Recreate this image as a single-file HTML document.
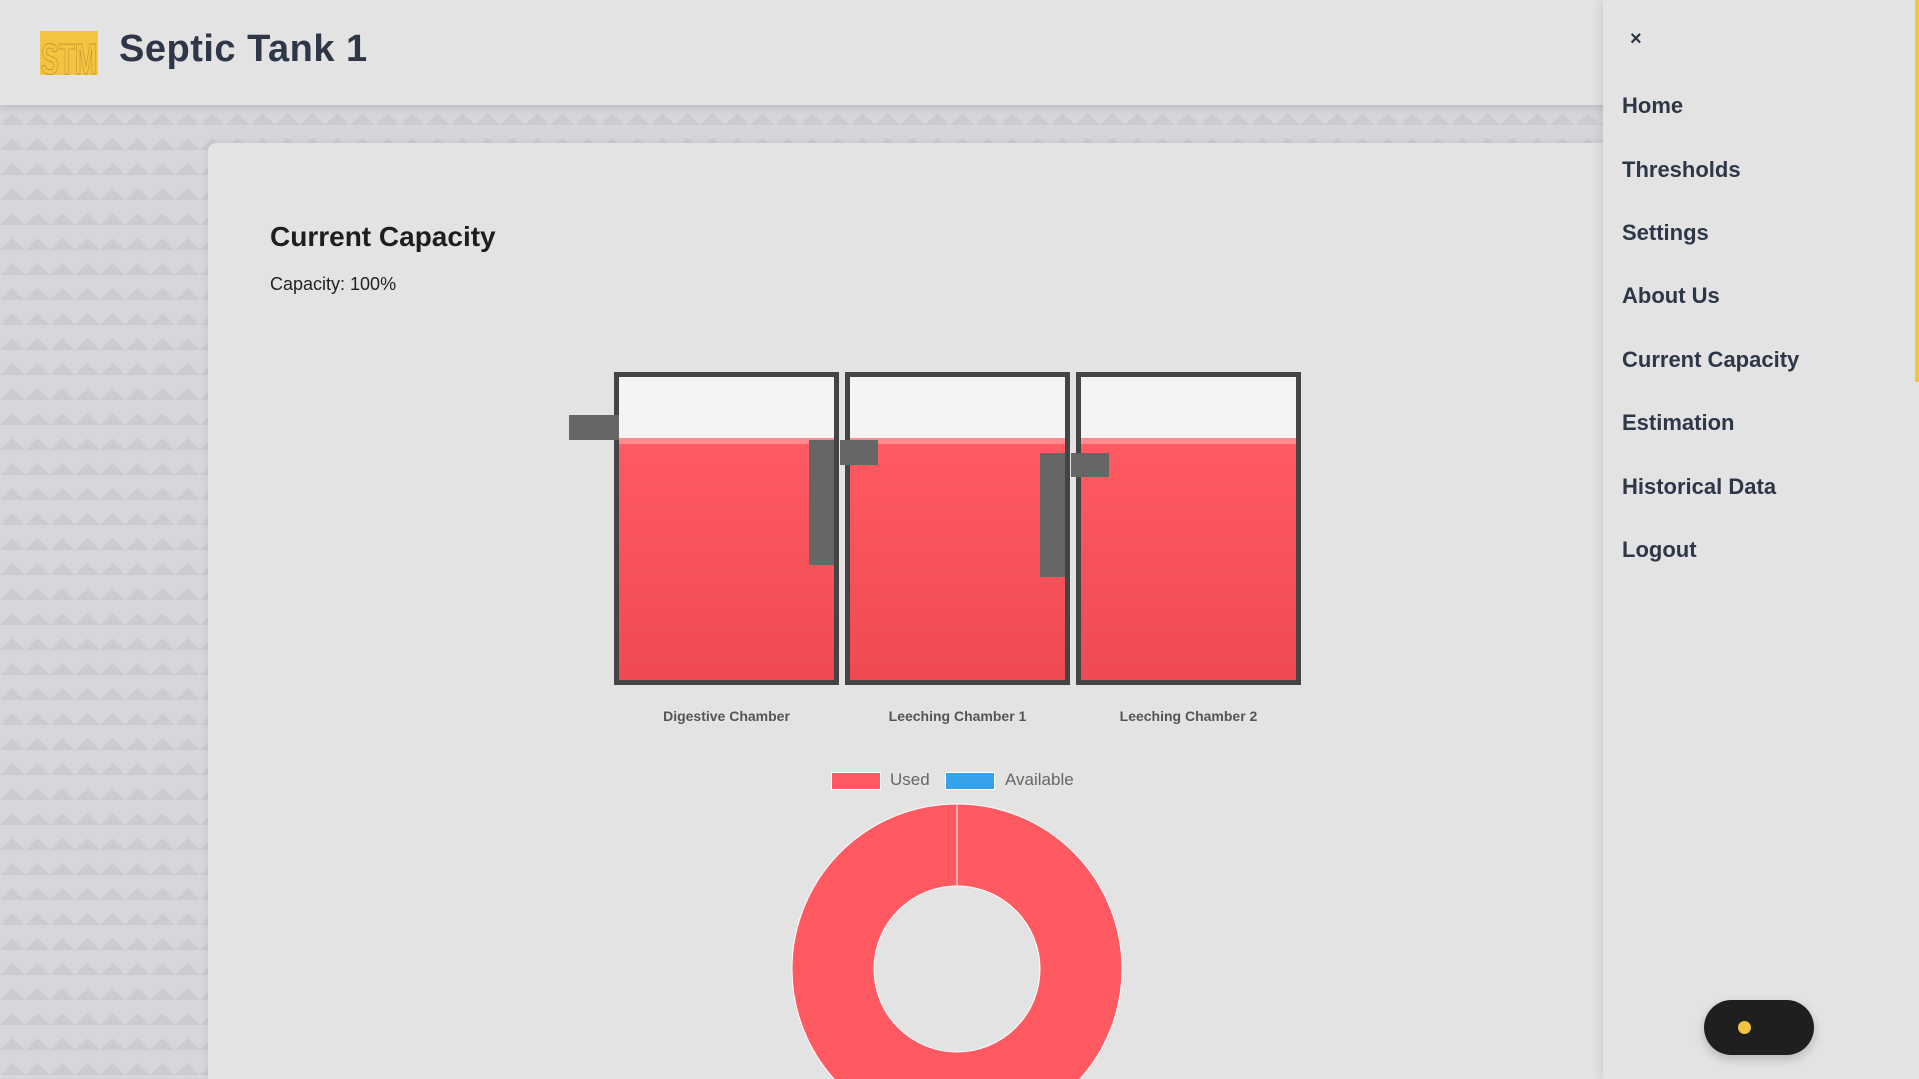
<!DOCTYPE html>
<html><head><meta charset="utf-8"><style>
*{margin:0;padding:0;box-sizing:border-box}
html,body{width:1919px;height:1079px;overflow:hidden}
body{background:#e3e3e3;font-family:"Liberation Sans",sans-serif}
#w{position:relative;width:1919px;height:1079px;overflow:hidden}
.hdr{position:absolute;left:0;top:0;width:1919px;height:105px;background:#e3e3e3;z-index:2;box-shadow:0 3px 8px rgba(0,0,0,.12)}
.bg{position:absolute;left:0;top:105px;width:1603px;height:974px}
.card{position:absolute;left:208px;top:143px;width:1420px;height:936px;background:#e3e3e3;border-radius:8px 8px 0 0;box-shadow:0 0 10px rgba(0,0,0,.08)}
.side{position:absolute;left:1603px;top:0;width:316px;height:1079px;background:#e3e3e3;z-index:3;box-shadow:-4px 0 8px rgba(0,0,0,.08)}
.nav{position:absolute;left:19px;font-size:22px;font-weight:bold;color:#2d3748}
.tank{position:absolute;top:372px;width:225px;height:313px;border:5px solid #444;background:#f4f4f4;overflow:hidden}
.water{position:absolute;left:0;right:0;top:61px;bottom:0;background:linear-gradient(#ff5a62,#ef4a52);border-top:6px solid #ff8a8f}
.p{position:absolute;background:#666;z-index:2}
.lbl{position:absolute;top:708px;font-size:14px;font-weight:bold;color:#555;width:225px;text-align:center}
</style></head><body><div id="w">
<div class="hdr">
<svg style="position:absolute;left:40px;top:31px" width="58" height="44" viewBox="0 0 58 44"><rect width="58" height="44" fill="#f4c33f"/><text x="1" y="43" font-family="Liberation Sans Narrow, Liberation Sans, sans-serif" font-weight="bold" font-size="44" textLength="56" lengthAdjust="spacingAndGlyphs" fill="#f4c33f" stroke="#b8912f" stroke-width="0.8">STM</text></svg>
<div style="position:absolute;left:119px;top:28px;font-size:38px;font-weight:bold;color:#2d3748;letter-spacing:0.5px">Septic Tank 1</div>
</div>
<svg class="bg" width="1603" height="974"><defs><pattern id="t" width="25" height="25" patternUnits="userSpaceOnUse"><rect width="25" height="25" fill="#d6d7db"/><polygon points="0,20 12.5,8 25,20" fill="#cbccd1"/></pattern></defs><rect width="1603" height="974" fill="url(#t)"/></svg>
<div class="card">
<div style="position:absolute;left:62px;top:78px;font-size:28px;font-weight:bold;color:#1e1e1e">Current Capacity</div>
<div style="position:absolute;left:62px;top:131px;font-size:18px;color:#222">Capacity: 100%</div>
</div>
<div class="tank" style="left:614px"><div class="water"></div></div>
<div class="tank" style="left:845px"><div class="water"></div></div>
<div class="tank" style="left:1076px"><div class="water"></div></div>
<div class="p" style="left:569px;top:415px;width:50px;height:25px"></div>
<div class="p" style="left:809px;top:440px;width:25px;height:125px"></div>
<div class="p" style="left:840px;top:440px;width:38px;height:25px"></div>
<div class="p" style="left:1040px;top:453px;width:25px;height:124px"></div>
<div class="p" style="left:1071px;top:453px;width:38px;height:24px"></div>
<div class="lbl" style="left:614px">Digestive Chamber</div>
<div class="lbl" style="left:845px">Leeching Chamber 1</div>
<div class="lbl" style="left:1076px">Leeching Chamber 2</div>
<div style="position:absolute;left:831px;top:772px;width:50px;height:18px;background:#ff5a62;border:1px solid #fff"></div>
<div style="position:absolute;left:890px;top:770px;font-size:17px;color:#666">Used</div>
<div style="position:absolute;left:945px;top:772px;width:50px;height:18px;background:#36a2eb;border:1px solid #fff"></div>
<div style="position:absolute;left:1005px;top:770px;font-size:17px;color:#666">Available</div>
<svg style="position:absolute;left:790px;top:802px" width="334" height="277"><circle cx="167" cy="167" r="124" fill="none" stroke="#ff5a62" stroke-width="82"/><line x1="167" y1="2" x2="167" y2="85" stroke="#fff" stroke-width="1"/><circle cx="167" cy="167" r="165" fill="none" stroke="#fff" stroke-width="1"/><circle cx="167" cy="167" r="83" fill="none" stroke="#fff" stroke-width="1"/></svg>
<div class="side">
<div style="position:absolute;left:27px;top:28px;font-size:20px;font-weight:bold;color:#2d3748">×</div>
<div class="nav" style="top:93px">Home</div>
<div class="nav" style="top:157px">Thresholds</div>
<div class="nav" style="top:220px">Settings</div>
<div class="nav" style="top:283px">About Us</div>
<div class="nav" style="top:347px">Current Capacity</div>
<div class="nav" style="top:410px">Estimation</div>
<div class="nav" style="top:474px">Historical Data</div>
<div class="nav" style="top:537px">Logout</div>
<div style="position:absolute;left:312px;top:0;width:4px;height:382px;background:#f4c33f"></div>
<div style="position:absolute;left:101px;top:1000px;width:110px;height:55px;border-radius:28px;background:#1f1f1f;box-shadow:0 4px 10px rgba(0,0,0,.2)"><div style="position:absolute;left:34px;top:21px;width:13px;height:13px;border-radius:50%;background:#f4c33f"></div></div>
</div>
</div></body></html>
